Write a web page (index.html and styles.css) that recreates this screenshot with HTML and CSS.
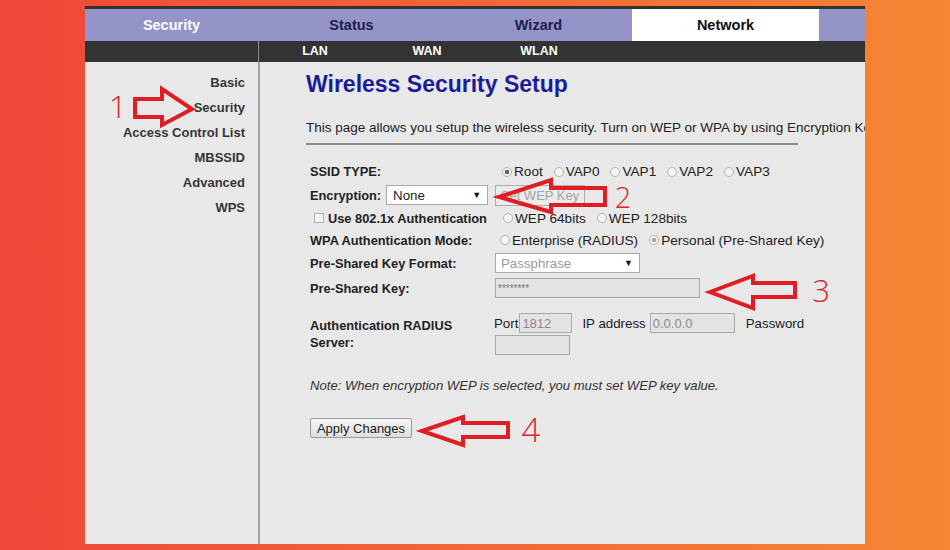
FILE: index.html
```html
<!DOCTYPE html>
<html lang="en">
<head>
<meta charset="utf-8">
<title>Wireless Security Setup</title>
<link rel="stylesheet" href="styles.css">
</head>
<body>
<div class="frame">
  <div class="tabs">
    <div class="tab tab-brand">Security</div>
    <div class="tab">Status</div>
    <div class="tab">Wizard</div>
    <div class="tab tab-active">Network</div>
    <div class="tab tab-rest"></div>
  </div>
  <div class="subnav">
    <div class="subnav-side"></div>
    <span class="subnav-link">LAN</span>
    <span class="subnav-link">WAN</span>
    <span class="subnav-link">WLAN</span>
  </div>
  <div class="page">
    <aside class="side">
      <span class="side-link">Basic</span>
      <span class="side-link">Security</span>
      <span class="side-link">Access Control List</span>
      <span class="side-link">MBSSID</span>
      <span class="side-link">Advanced</span>
      <span class="side-link">WPS</span>
    </aside>
    <main class="main">
      <h1 class="title">Wireless Security Setup</h1>
      <p class="intro">This page allows you setup the wireless security. Turn on WEP or WPA by using Encryption Keys could prevent any unauthorized access to your wireless network.</p>
      <hr class="rule">
      <form class="form">
        <div class="row row-ssid">
          <div class="lbl">SSID TYPE:</div>
          <div class="val pad-7">
            <label class="opt"><input class="rd" type="radio" name="ssid" checked>Root</label>
            <label class="opt"><input class="rd" type="radio" name="ssid">VAP0</label>
            <label class="opt"><input class="rd" type="radio" name="ssid">VAP1</label>
            <label class="opt"><input class="rd" type="radio" name="ssid">VAP2</label>
            <label class="opt"><input class="rd" type="radio" name="ssid">VAP3</label>
          </div>
        </div>
        <div class="row row-enc">
          <div class="lbl">Encryption:
            <div class="select select-enc"><span>None</span><span class="caret">&#9660;</span></div>
          </div>
          <div class="val">
            <button class="btn-key" type="button" disabled>Set WEP Key</button>
          </div>
        </div>
        <div class="row row-8021x">
          <div class="lbl"><input class="cb" type="checkbox" disabled>Use 802.1x Authentication</div>
          <div class="val pad-8 dim">
            <label class="opt"><input class="rd" type="radio" name="wep" disabled>WEP 64bits</label>
            <label class="opt"><input class="rd" type="radio" name="wep" disabled>WEP 128bits</label>
          </div>
        </div>
        <div class="row row-mode">
          <div class="lbl">WPA Authentication Mode:</div>
          <div class="val pad-5">
            <label class="opt"><input class="rd" type="radio" name="mode">Enterprise (RADIUS)</label>
            <label class="opt"><input class="rd rd-soft" type="radio" name="mode" checked>Personal (Pre-Shared Key)</label>
          </div>
        </div>
        <div class="row row-fmt">
          <div class="lbl">Pre-Shared Key Format:</div>
          <div class="val">
            <div class="select select-fmt"><span class="muted">Passphrase</span><span class="caret">&#9660;</span></div>
          </div>
        </div>
        <div class="row row-psk">
          <div class="lbl">Pre-Shared Key:</div>
          <div class="val">
            <input class="field field-psk" type="text" value="********" disabled>
          </div>
        </div>
        <div class="row row-radius">
          <div class="lbl lbl-wrap">Authentication RADIUS<br>Server:</div>
          <div class="val val-stack">
            <div class="line">
              <span class="port">Port</span><input class="field field-port" type="text" value="1812" disabled>
              <span class="ip">IP address</span><input class="field field-ip" type="text" value="0.0.0.0" disabled>
              <span class="pw">Password</span>
            </div>
            <input class="field field-pw" type="password" disabled>
          </div>
        </div>
        <p class="note">Note: When encryption WEP is selected, you must set WEP key value.</p>
        <button class="apply" type="button">Apply Changes</button>
      </form>
    </main>
  </div>
</div>

<svg class="marks" width="950" height="550" viewBox="0 0 950 550">
  <g class="arrow">
    <polygon points="135,99 162,99 162,89 192,109 162,125 162,117 135,117"/>
    <polygon points="499,197 551,180 551,188 605,188 605,205 551,205 551,212"/>
    <polygon points="710,292 753,276 753,283 795,283 795,297 753,297 753,308"/>
    <polygon points="422,431 463,417 463,423 508,423 508,437 463,437 463,445"/>
  </g>
  <g class="step">
    <text x="118" y="118" font-size="32">1</text>
    <text x="623" y="208" font-size="29">2</text>
    <text x="821" y="302" font-size="31">3</text>
    <text x="531" y="442" font-size="33">4</text>
  </g>
</svg>
</body>
</html>
```

FILE: styles.css
```css
* { box-sizing: border-box; }

html, body { margin: 0; }

body {
  position: relative;
  width: 950px;
  height: 550px;
  overflow: hidden;
  padding-top: 6px;
  background: linear-gradient(90deg, #ef4739 0%, #f26337 45%, #f58634 100%);
  font-family: "Liberation Sans", Arial, sans-serif;
  color: #222;
}

/* router admin window */
.frame {
  margin-left: 85px;
  width: 780px;
  height: 538px;
  display: flex;
  flex-direction: column;
  overflow: hidden;
  background: #e8e8e8;
}

/* top tab strip */
.tabs {
  display: flex;
  height: 35px;
  border-top: 3px solid #333;
  background: #9494c9;
}
.tab {
  width: 187px;
  flex: none;
  display: flex;
  align-items: center;
  justify-content: center;
  font-size: 14.5px;
  font-weight: bold;
  color: #1e1e4c;
}
.tab-brand { width: 173px; color: #fff; }
.tab-active { background: #fff; color: #111; }
.tab-rest { flex: 1; width: auto; }

/* second level menu */
.subnav {
  display: flex;
  height: 21px;
  background: #333;
}
.subnav-side {
  width: 174px;
  flex: none;
  border-right: 1px solid #8c8c8c;
}
.subnav-link {
  width: 112px;
  text-align: center;
  line-height: 21px;
  font-size: 12.5px;
  font-weight: bold;
  color: #fff;
}

.page {
  flex: 1;
  display: flex;
}

/* left menu */
.side {
  width: 175px;
  flex: none;
  border-right: 2px solid #a4a4a4;
  padding-top: 8px;
}
.side-link {
  display: block;
  padding-right: 13px;
  text-align: right;
  line-height: 25px;
  font-size: 13px;
  font-weight: bold;
  color: #363636;
}

/* content */
.main {
  flex: 1;
  min-width: 0;
  padding-left: 46px;
}
.title {
  margin: 9px 0 0;
  line-height: 27px;
  font-size: 23px;
  font-weight: bold;
  color: #1c1c9a;
}
.intro {
  margin: 22px 0 0;
  line-height: 16px;
  font-size: 13.5px;
  white-space: nowrap;
  color: #222;
}
.rule {
  width: 492px;
  height: 0;
  margin: 7px 0 0;
  border: 0;
  border-top: 2px solid #8a8a8a;
}

.form {
  margin: 15px 0 0 4px;
}
.row {
  display: flex;
  align-items: center;
}
.row-ssid { height: 23px; }
.row-enc { height: 24px; }
.row-8021x { height: 22px; }
.row-mode { height: 22px; }
.row-fmt { height: 24px; }
.row-psk { height: 26px; }
.row-radius { height: 46px; margin-top: 10px; }

.lbl {
  width: 185px;
  flex: none;
  display: flex;
  align-items: center;
  font-size: 12.8px;
  font-weight: bold;
  color: #222;
}
.lbl-wrap {
  display: block;
  line-height: 17px;
}
.val {
  display: flex;
  align-items: center;
  font-size: 13.6px;
  color: #222;
}
.pad-5 { padding-left: 5px; }
.pad-7 { padding-left: 7px; }
.pad-8 { padding-left: 8px; }

/* radio options */
.opt {
  display: inline-flex;
  align-items: center;
  margin-right: 11px;
}
.rd {
  appearance: none;
  width: 10px;
  height: 10px;
  margin: 0 2px 0 0;
  border: 1px solid #b4b4b4;
  border-radius: 50%;
  background: #f3f3f3;
}
.rd:checked {
  background: radial-gradient(circle, #626262 0 2px, #f3f3f3 2.6px);
}
.rd.rd-soft:checked {
  background: radial-gradient(circle, #a9a9a9 0 2px, #f3f3f3 2.6px);
}
.cb {
  appearance: none;
  width: 10px;
  height: 10px;
  margin: 0 4px 0 4px;
  border: 1px solid #b0b0b0;
  background: #f3f3f3;
}

/* drop-downs */
.select {
  height: 20px;
  display: flex;
  align-items: center;
  justify-content: space-between;
  padding: 0 6px 0 6px;
  border: 1px solid #a9a9a9;
  background: #fff;
  font-size: 13.3px;
  font-weight: normal;
  color: #222;
}
.select-enc { width: 102px; margin-left: 5px; }
.select-fmt { width: 145px; padding-left: 5px; }
.caret { font-size: 9px; color: #111; }
.muted { color: #9a9a9a; }

.btn-key {
  width: 90px;
  height: 21px;
  padding: 0;
  border: 1px solid #adadad;
  background: #ebebeb;
  font-family: inherit;
  font-size: 13px;
  color: #a3a3a3;
}

/* text fields */
.field {
  height: 20px;
  padding: 0 2px;
  border: 1px solid #a9a9a9;
  background: #e3e3e3;
  font-family: inherit;
  font-size: 13px;
  color: #8a8a8a;
}
.field-psk { width: 205px; font-size: 10px; color: #777; }
.field-port { width: 53px; margin-left: 1px; }
.field-ip { width: 85px; margin-left: 4px; }
.field-pw { width: 75px; margin-top: 2px; }

.val-stack {
  flex-direction: column;
  align-items: flex-start;
  font-size: 13.3px;
}
.line {
  display: flex;
  align-items: center;
  margin-left: -1px;
}
.ip { margin-left: 10px; }
.pw { margin-left: 11px; }

.note {
  margin: 21px 0 0;
  line-height: 16px;
  font-size: 13.1px;
  font-style: italic;
  color: #333;
}
.apply {
  display: block;
  width: 102px;
  height: 20px;
  margin-top: 24px;
  padding: 0;
  border: 1px solid #9a9a9a;
  border-radius: 2px;
  background: linear-gradient(#f6f6f6, #dedede);
  font-family: inherit;
  font-size: 13px;
  color: #222;
}

/* red call-out arrows and step numbers */
.marks {
  position: absolute;
  top: 0;
  left: 0;
  pointer-events: none;
}
.arrow polygon {
  fill: none;
  stroke: #e01d25;
  stroke-width: 4;
  stroke-linejoin: miter;
}
.step text {
  fill: #d9262b;
  text-anchor: middle;
  font-family: "Open Sans", Lato, "Liberation Sans", sans-serif;
  font-weight: 300;
}
```
